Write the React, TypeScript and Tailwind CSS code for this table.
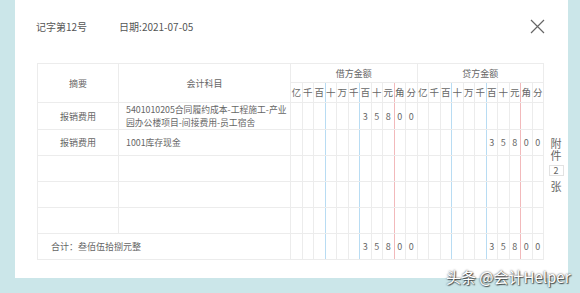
import React from 'react';

const DIGITS = ['亿', '千', '百', '十', '万', '千', '百', '十', '元', '角', '分'];
const AMOUNT = ['', '', '', '', '', '', '3', '5', '8', '0', '0'];
const EMPTY = Array(11).fill('');

// right border colour for each digit column inside one 11-column block
const digitBorder = (i: number) => {
  if (i === 2 || i === 5) return 'border-r-[#b8dcf3]';
  if (i === 8) return 'border-r-[#f2b9bb]';
  return 'border-r-[#ececec]';
};

const DigitCells = ({ values }: { values: string[] }) => (
  <>
    {values.map((v, i) => (
      <td key={i} className={`border border-[#ececec] ${digitBorder(i)} p-0 text-center`}>
        {v}
      </td>
    ))}
  </>
);

interface Row {
  summary: string;
  account: React.ReactNode;
  debit: string[];
  credit: string[];
}

const rows: Row[] = [
  {
    summary: '报销费用',
    account: (
      <>
        5401010205合同履约成本-工程施工-产业
        <br />
        园办公楼项目-间接费用-员工宿舍
      </>
    ),
    debit: AMOUNT,
    credit: EMPTY,
  },
  { summary: '报销费用', account: '1001库存现金', debit: EMPTY, credit: AMOUNT },
  { summary: '', account: '', debit: EMPTY, credit: EMPTY },
  { summary: '', account: '', debit: EMPTY, credit: EMPTY },
  { summary: '', account: '', debit: EMPTY, credit: EMPTY },
];

const App = () => {
  return (
    <div
      className="relative w-[580px] h-[293px] overflow-hidden bg-[#cbe6e9]"
      style={{ fontFamily: '"Noto Sans CJK SC", "Noto Sans", sans-serif' }}
    >
      <div className="ml-[15px] w-[553px] h-[278px] bg-white pl-[22px]">
        <div className="flex items-center h-[52px] pr-[23px] text-[10px] text-[#555]">
          <span className="-ml-px">记字第12号</span>
          <span className="ml-[32px]">日期:2021-07-05</span>
          <div className="ml-auto">
            <svg width="15" height="15" viewBox="0 0 15 15" fill="none" stroke="#666" strokeWidth="1.2">
              <path d="M1 1 L14 14 M14 1 L1 14" />
            </svg>
          </div>
        </div>

        <div className="flex mt-[11px]">
          <table className="shrink-0 table-fixed border-collapse w-[507px] text-[9px] text-[#666] leading-none">
            <colgroup>
              <col className="w-[81px]" />
              <col className="w-[172px]" />
              {Array.from({ length: 22 }).map((_, i) => (
                <col key={i} className="w-[11.5px]" />
              ))}
            </colgroup>
            <thead>
              <tr className="h-[19px]">
                <th rowSpan={2} className="border border-[#ececec] font-normal">摘要</th>
                <th rowSpan={2} className="border border-[#ececec] font-normal">会计科目</th>
                <th colSpan={11} className="border border-[#ececec] font-normal">借方金额</th>
                <th colSpan={11} className="border border-[#ececec] font-normal">贷方金额</th>
              </tr>
              <tr className="h-[20px]">
                {[...DIGITS, ...DIGITS].map((d, i) => (
                  <th
                    key={i}
                    className={`border border-[#ececec] ${digitBorder(i % 11)} p-0 font-normal text-[9.5px]`}
                  >
                    {d}
                  </th>
                ))}
              </tr>
            </thead>
            <tbody>
              {rows.map((r, idx) => (
                <tr key={idx} className="h-[26px]">
                  <td className="border border-[#ececec] text-center">{r.summary}</td>
                  <td className="border border-[#ececec] pl-[7px] pr-0 leading-[13px] whitespace-nowrap overflow-hidden text-[8.8px]">
                    {r.account}
                  </td>
                  <DigitCells values={r.debit} />
                  <DigitCells values={r.credit} />
                </tr>
              ))}
              <tr className="h-[26px]">
                <td colSpan={2} className="border border-[#ececec] pl-[13px]">
                  合计：叁佰伍拾捌元整
                </td>
                <DigitCells values={AMOUNT} />
                <DigitCells values={AMOUNT} />
              </tr>
            </tbody>
          </table>

          <div className="flex flex-col items-center w-[24px] pt-[74px] text-[11px] text-[#666] leading-[12px]">
            <span>附</span>
            <span>件</span>
            <span className="mt-[4px] w-[15px] h-[11px] border border-[#e2e2e2] text-[9px] leading-[9px] text-center">
              2
            </span>
            <span className="mt-[4px]">张</span>
          </div>
        </div>
      </div>

      <div
        className="absolute left-[446px] top-[266px] text-[15px] text-white whitespace-nowrap"
        style={{ textShadow: '0 0 2px rgba(0,0,0,0.8), 1px 1px 1px rgba(0,0,0,0.6)' }}
      >
        头条 @会计Helper
      </div>
    </div>
  );
};

export default App;
